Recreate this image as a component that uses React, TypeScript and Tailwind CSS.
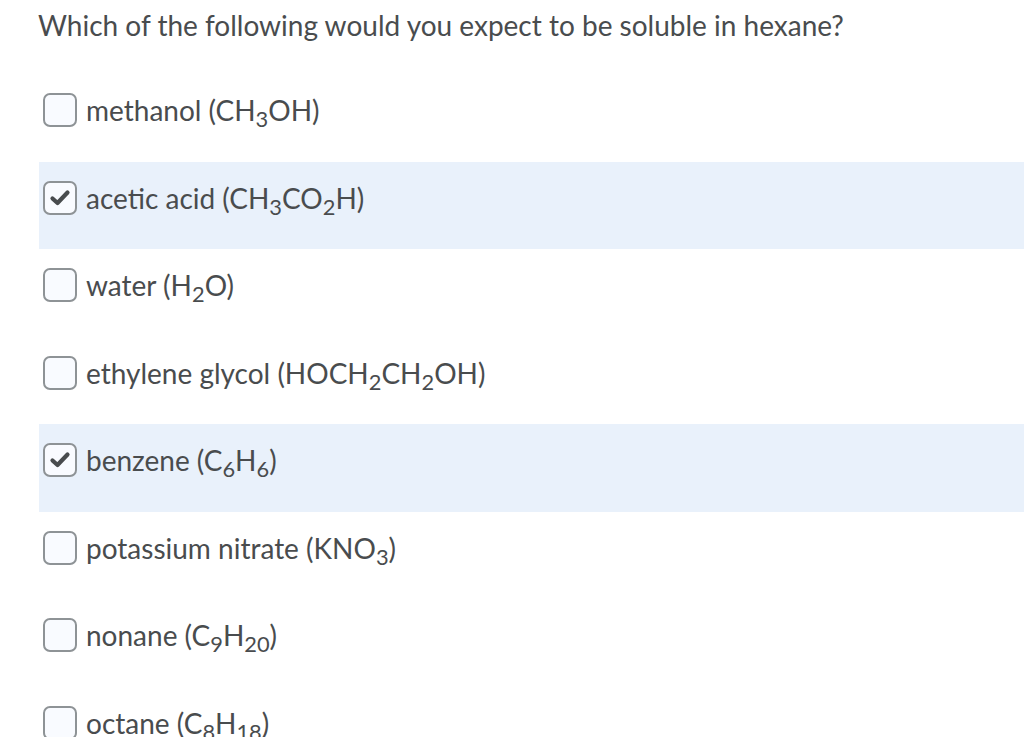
import React from "react";

type Opt = { label: React.ReactNode; checked: boolean };

const S = ({ children }: { children: React.ReactNode }) => <sub className="text-[78%] -bottom-[0.28em]">{children}</sub>;

const options: Opt[] = [
  { label: <>methanol (CH<S>3</S>OH)</>, checked: false },
  { label: <>acetic acid (CH<S>3</S>CO<S>2</S>H)</>, checked: true },
  { label: <>water (H<S>2</S>O)</>, checked: false },
  { label: <>ethylene glycol (HOCH<S>2</S>CH<S>2</S>OH)</>, checked: false },
  { label: <>benzene (C<S>6</S>H<S>6</S>)</>, checked: true },
  { label: <>potassium nitrate (KNO<S>3</S>)</>, checked: false },
  { label: <>nonane (C<S>9</S>H<S>20</S>)</>, checked: false },
  { label: <>octane (C<S>8</S>H<S>18</S>)</>, checked: false },
];

function Box({ checked }: { checked: boolean }) {
  return (
    <div className="w-[34px] h-[34px] shrink-0 rounded-[7px] border-2 border-[#8e9396] bg-[#f9fbff] flex items-center justify-center">
      {checked && (
        <svg width="22" height="18" viewBox="0 0 22 18">
          <path d="M3.5 9.5 L8.5 14 L18.5 3.5" fill="none" stroke="#494c4e" strokeWidth="4.2" strokeLinecap="round" strokeLinejoin="round" />
        </svg>
      )}
    </div>
  );
}

export default function App() {
  return (
    <div className="w-[1024px] h-[737px] overflow-hidden bg-white text-[#494c4e]" style={{ fontFamily: "Lato, 'Noto Sans', sans-serif" }}>
      <div className="h-[74px] pl-[38px] pt-[7px] text-[28px] leading-[36px]">
        Which of the following would you expect to be soluble in hexane?
      </div>
      <div className="pl-[39px]">
        {options.map((o, i) => (
          <div
            key={i}
            className={`h-[87.5px] flex items-start gap-[9px] pl-[4px] pt-[19px] text-[28px] ${o.checked ? "bg-[#e9f1fb]" : ""}`}
          >
            <Box checked={o.checked} />
            <span className="leading-[34px]">{o.label}</span>
          </div>
        ))}
      </div>
    </div>
  );
}
